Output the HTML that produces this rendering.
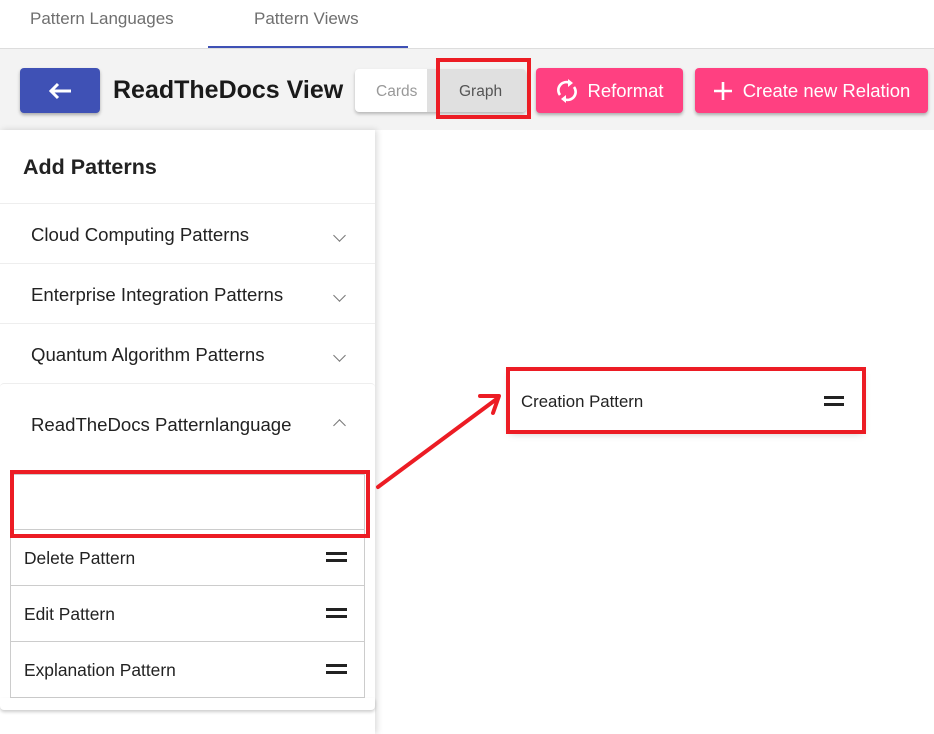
<!DOCTYPE html>
<html><head><style>
*{box-sizing:border-box;margin:0;padding:0}
body{width:934px;height:734px;overflow:hidden;background:#fff;font-family:"Liberation Sans",Arial,sans-serif;position:relative}
.abs{position:absolute}
.tabs{left:0;top:0;width:934px;height:49px;background:#fff;border-bottom:1px solid #ddd}
.tab{top:9px;font-size:17px;color:#6f6f6f}
.tool{left:0;top:49px;width:934px;height:81px;background:#f3f3f3}
.btn{border-radius:4px;box-shadow:0 2px 3px rgba(0,0,0,.3);color:#fff;font-size:18px;display:flex;align-items:center;justify-content:center}
.side{left:0;top:130px;width:375px;height:604px;background:#fff;box-shadow:2px 0 6px rgba(0,0,0,.15)}
.panel{left:0;width:375px;height:60px;border-top:1px solid #eee;font-size:18.6px;color:#222;padding:20px 0 0 31px}
.chev{position:absolute;left:335px;width:9px;height:9px;border-right:1.5px solid #777;border-bottom:1.5px solid #777;transform:rotate(45deg)}
.item{left:10px;width:355px;height:56px;border:1px solid #ccc;border-top:none;font-size:17.4px;color:#222;padding:18px 0 0 13px}
.eq{position:absolute;right:17px;top:22px;width:21px;height:10px;border-top:3.5px solid #222;border-bottom:3.5px solid #222}
.red{border:4px solid #ec1c24}
</style></head><body>
<div class="abs tabs"></div>
<div class="abs tab" style="left:30px">Pattern Languages</div>
<div class="abs tab" style="left:254px">Pattern Views</div>
<div class="abs" style="left:208px;top:46px;width:200px;height:2px;background:#3f51b5"></div>
<div class="abs tool"></div>
<div class="abs btn" style="left:20px;top:68px;width:80px;height:45px;background:#3f51b5"><svg width="26" height="20" viewBox="0 0 26 20"><path d="M24 10 H4 M11 3 L4 10 L11 17" fill="none" stroke="#fff" stroke-width="3"/></svg></div>
<div class="abs" style="left:113px;top:76px;font-size:25px;font-weight:bold;color:#1a1a1a">ReadTheDocs View</div>
<div class="abs" style="left:355px;top:69px;width:171px;height:43px;background:#fff;border-radius:4px;box-shadow:0 2px 3px rgba(0,0,0,.25)"></div>
<div class="abs" style="left:427px;top:69px;width:99px;height:43px;background:#e0e0e0;border-radius:0 4px 4px 0"></div>
<div class="abs" style="left:376px;top:83px;font-size:15.5px;color:#999">Cards</div>
<div class="abs" style="left:459px;top:83px;font-size:15.5px;color:#555">Graph</div>
<div class="abs red" style="left:436px;top:58px;width:95px;height:61px"></div>
<div class="abs btn" style="left:536px;top:68px;width:147px;height:45px;background:#ff4081;font-size:18.5px"><svg width="24" height="26" viewBox="0 0 24 26" style="margin-right:8px"><path d="M5 17 A8 8 0 0 1 15 5" fill="none" stroke="#fff" stroke-width="2.6"/><path d="M13 1 L18 5 L13 9Z" fill="#fff"/><path d="M19 9 A8 8 0 0 1 9 21" fill="none" stroke="#fff" stroke-width="2.6"/><path d="M11 17 L6 21 L11 25Z" fill="#fff"/></svg>Reformat</div>
<div class="abs btn" style="left:695px;top:68px;width:233px;height:45px;background:#ff4081;font-size:18.5px"><svg width="20" height="20" viewBox="0 0 20 20" style="margin-right:10px"><path d="M10 1 V19 M1 10 H19" stroke="#fff" stroke-width="2.6"/></svg>Create new Relation</div>
<div class="abs side"></div>
<div class="abs" style="left:23px;top:155px;font-size:21.5px;font-weight:bold;color:#222">Add Patterns</div>
<div class="abs panel" style="top:203px">Cloud Computing Patterns<span class="chev" style="top:27px"></span></div>
<div class="abs panel" style="top:263px">Enterprise Integration Patterns<span class="chev" style="top:27px"></span></div>
<div class="abs panel" style="top:323px">Quantum Algorithm Patterns<span class="chev" style="top:27px"></span></div>
<div class="abs panel" style="top:383px;height:80px;padding-top:30px;border-radius:4px 4px 0 0">ReadTheDocs Patternlanguage<span class="chev" style="top:37px;transform:rotate(225deg)"></span></div>
<div class="abs" style="left:10px;top:474px;width:355px;height:56px;border:1px solid #ccc"></div>
<div class="abs item" style="top:530px">Delete Pattern<span class="eq"></span></div>
<div class="abs item" style="top:586px">Edit Pattern<span class="eq"></span></div>
<div class="abs item" style="top:642px">Explanation Pattern<span class="eq"></span></div>
<div class="abs" style="left:0;top:698px;width:375px;height:12px;box-shadow:0 2px 3px rgba(0,0,0,.2);border-radius:0 0 4px 4px;background:#fff"></div>
<div class="abs red" style="left:10px;top:470px;width:360px;height:68px"></div>
<div class="abs" style="left:510px;top:371px;width:352px;height:59px;background:#fff;box-shadow:0 3px 8px rgba(0,0,0,.25)"></div>
<div class="abs" style="left:521px;top:392px;font-size:16.8px;color:#222">Creation Pattern</div>
<div class="abs" style="left:824px;top:396px;width:20px;height:10px;border-top:3.5px solid #222;border-bottom:3.5px solid #222"></div>
<div class="abs red" style="left:506px;top:367px;width:360px;height:67px"></div>
<svg class="abs" style="left:0;top:0" width="934" height="734"><path d="M378 487 L498 398 M480 396 L499 396 L493 413" fill="none" stroke="#ec1c24" stroke-width="4" stroke-linecap="round" stroke-linejoin="round"/></svg>
</body></html>
